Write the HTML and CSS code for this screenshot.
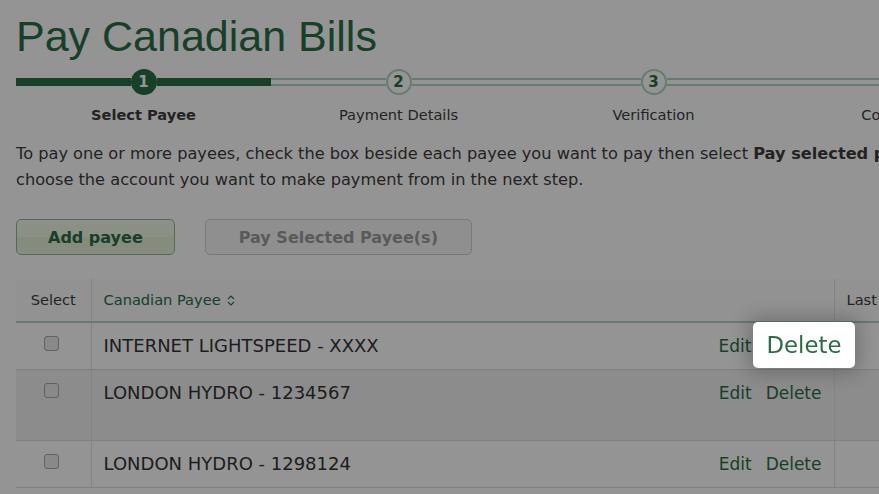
FILE: index.html
```html
<!DOCTYPE html>
<html lang="en">
  <head>
    <meta charset="UTF-8">
    <meta name="viewport" content="width=device-width, initial-scale=1.0">
    <title>Pay Canadian Bills</title>
    <link rel="stylesheet" href="styles.css">
  </head>
  <body>
  <div class="page">
    <h1 class="page-title">Pay Canadian Bills</h1>

    <ol class="steps">
      <li class="step done current">
        <div class="step-track"><span class="line"></span><span class="dot">1</span><span class="line"></span></div>
        <div class="step-label">Select Payee</div>
      </li>
      <li class="step">
        <div class="step-track"><span class="line"></span><span class="dot">2</span><span class="line"></span></div>
        <div class="step-label">Payment Details</div>
      </li>
      <li class="step">
        <div class="step-track"><span class="line"></span><span class="dot">3</span><span class="line"></span></div>
        <div class="step-label">Verification</div>
      </li>
      <li class="step">
        <div class="step-track"><span class="line"></span><span class="dot">4</span><span class="line"></span></div>
        <div class="step-label">Confirmation</div>
      </li>
    </ol>

    <p class="intro">
      To pay one or more payees, check the box beside each payee you want to pay then select <strong>Pay selected payee(s)</strong> and<br>
      choose the account you want to make payment from in the next step.
    </p>

    <div class="button-row">
      <button class="btn btn-primary">Add payee</button>
      <button class="btn btn-disabled" disabled>Pay Selected Payee(s)</button>
    </div>

    <table class="payees">
      <colgroup>
        <col class="col-select">
        <col class="col-payee">
        <col class="col-last">
      </colgroup>
      <thead>
        <tr>
          <th class="cell-select">Select</th>
          <th class="sortable">Canadian Payee
            <svg class="sort-icon" width="8" height="11" viewBox="0 0 8 11"><path d="M1 4 L4 1 L7 4 M1 7 L4 10 L7 7" fill="none" stroke="currentColor" stroke-width="1.1"/></svg>
          </th>
          <th>Last Payment</th>
        </tr>
      </thead>
      <tbody>
        <tr>
          <td class="cell-select"><span class="check"></span></td>
          <td>
            <div class="payee">
              <span>INTERNET LIGHTSPEED - XXXX</span>
              <span class="row-actions">
                <a class="link" href="#">Edit</a>
                <!-- the tour lifts this link above the overlay -->
                <span class="spot-anchor"><a class="spotlight" href="#">Delete</a></span>
              </span>
            </div>
          </td>
          <td></td>
        </tr>
        <tr class="striped">
          <td class="cell-select tall"><span class="check"></span></td>
          <td class="tall">
            <div class="payee">
              <span>LONDON HYDRO - 1234567</span>
              <span class="row-actions">
                <a class="link" href="#">Edit</a>
                <a class="link" href="#">Delete</a>
              </span>
            </div>
          </td>
          <td class="tall"></td>
        </tr>
        <tr>
          <td class="cell-select"><span class="check"></span></td>
          <td>
            <div class="payee">
              <span>LONDON HYDRO - 1298124</span>
              <span class="row-actions">
                <a class="link" href="#">Edit</a>
                <a class="link" href="#">Delete</a>
              </span>
            </div>
          </td>
          <td></td>
        </tr>
      </tbody>
    </table>
  </div>

  <div class="overlay"></div>
  </body>
</html>
```

FILE: styles.css
```css
html, body {
  margin: 0;
}

body {
  background: #fff;
  color: #3d3d3d;
  font-family: "DejaVu Sans", Verdana, sans-serif;
  overflow: hidden;
}

.page {
  width: 1100px;
  padding: 0 16px;
}

.page-title {
  margin: 10px 0 0;
  font-family: "Liberation Sans", Arial, sans-serif;
  font-weight: normal;
  font-size: 43px;
  line-height: 52px;
  color: #2a6e48;
}

/* stepper */
.steps {
  display: flex;
  margin: 7px 0 0;
  padding: 0;
  list-style: none;
}

.step {
  width: 255px;
}

.step-track {
  display: flex;
  align-items: center;
  height: 26px;
}

.line {
  flex: 1;
  height: 8px;
  box-sizing: border-box;
  border-top: 2px solid #b3d5c0;
  border-bottom: 2px solid #b3d5c0;
}

.dot {
  display: flex;
  align-items: center;
  justify-content: center;
  width: 26px;
  height: 26px;
  box-sizing: border-box;
  border: 2px solid #b3d5c0;
  border-radius: 50%;
  background: #fff;
  color: #2a6e48;
  font-size: 15px;
  font-weight: bold;
}

.step.done .line {
  background: #2a6e48;
  border-color: #2a6e48;
}

.step.done .dot {
  background: #2a6e48;
  border-color: #2a6e48;
  color: #fff;
}

.step-label {
  margin-top: 10px;
  text-align: center;
  font-size: 14.6px;
  line-height: 20px;
}

.step.current .step-label {
  font-weight: bold;
}

.intro {
  margin: 16px 0 0;
  font-size: 16.2px;
  line-height: 26px;
  white-space: nowrap;
}

/* buttons */
.button-row {
  display: flex;
  gap: 30px;
  margin-top: 26px;
}

.btn {
  height: 36px;
  box-sizing: border-box;
  padding: 0 31px;
  border-radius: 5px;
  font-family: "DejaVu Sans", Verdana, sans-serif;
  font-size: 16px;
  font-weight: bold;
}

.btn-primary {
  border: 1.5px solid #8fb79d;
  color: #2a6e48;
  background: linear-gradient(#f2fae9 0, #eef7e4 50%, #e3f0d6 50%, #e8f3dd 100%);
}

.btn-disabled {
  padding: 0 33px;
  border: 1.5px solid #d2d2d2;
  color: #9c9c9c;
  background: #f6f6f6;
}

/* payee table */
.payees {
  width: 1060px;
  margin-top: 24px;
  border-collapse: collapse;
  table-layout: fixed;
}

.col-select {
  width: 75px;
}

.col-payee {
  width: 743px;
}

.payees th {
  padding: 11px 12px;
  background: #fbfbfb;
  border-bottom: 2px solid #b3d5c0;
  border-left: 1px solid #e2e2e2;
  text-align: left;
  font-weight: normal;
  font-size: 14.6px;
  line-height: 20px;
  white-space: nowrap;
}

.payees td {
  padding: 11px 12px;
  border-bottom: 1px solid #dcdcdc;
  border-left: 1px solid #e2e2e2;
  vertical-align: top;
  font-size: 18px;
  line-height: 24px;
  color: #343434;
}

.payees .cell-select {
  border-left: none;
  text-align: center;
}

.payees td.tall {
  padding-bottom: 35px;
}

.striped td {
  background: #f2f2f2;
}

.sortable {
  color: #2a6e48;
}

.sort-icon {
  margin-left: 2px;
  vertical-align: -1px;
}

.check {
  display: block;
  width: 15px;
  height: 15px;
  box-sizing: border-box;
  margin: 2px 0 0 calc(50% - 9px);
  border: 1.5px solid #a9a9a9;
  border-radius: 3px;
  background: #ececec;
}

.payee {
  display: flex;
  justify-content: space-between;
}

.row-actions {
  display: flex;
  gap: 14px;
  font-size: 17px;
}

.link {
  display: block;
  color: #2a6e48;
  text-decoration: none;
}

.spot-anchor {
  position: relative;
  width: 56px;
  height: 24px;
}

/* walkthrough overlay */
.overlay {
  position: fixed;
  inset: 0;
  z-index: 10;
  background: rgba(0, 0, 0, 0.42);
}

.spotlight {
  position: absolute;
  left: -13px;
  top: -12px;
  z-index: 20;
  height: 46px;
  padding: 0 14px;
  border-radius: 5px;
  background: #fff;
  box-shadow: 0 0 18px 6px rgba(0, 0, 0, 0.2);
  color: #2a6e48;
  text-decoration: none;
  font-size: 22.8px;
  line-height: 46px;
  white-space: nowrap;
}
```
